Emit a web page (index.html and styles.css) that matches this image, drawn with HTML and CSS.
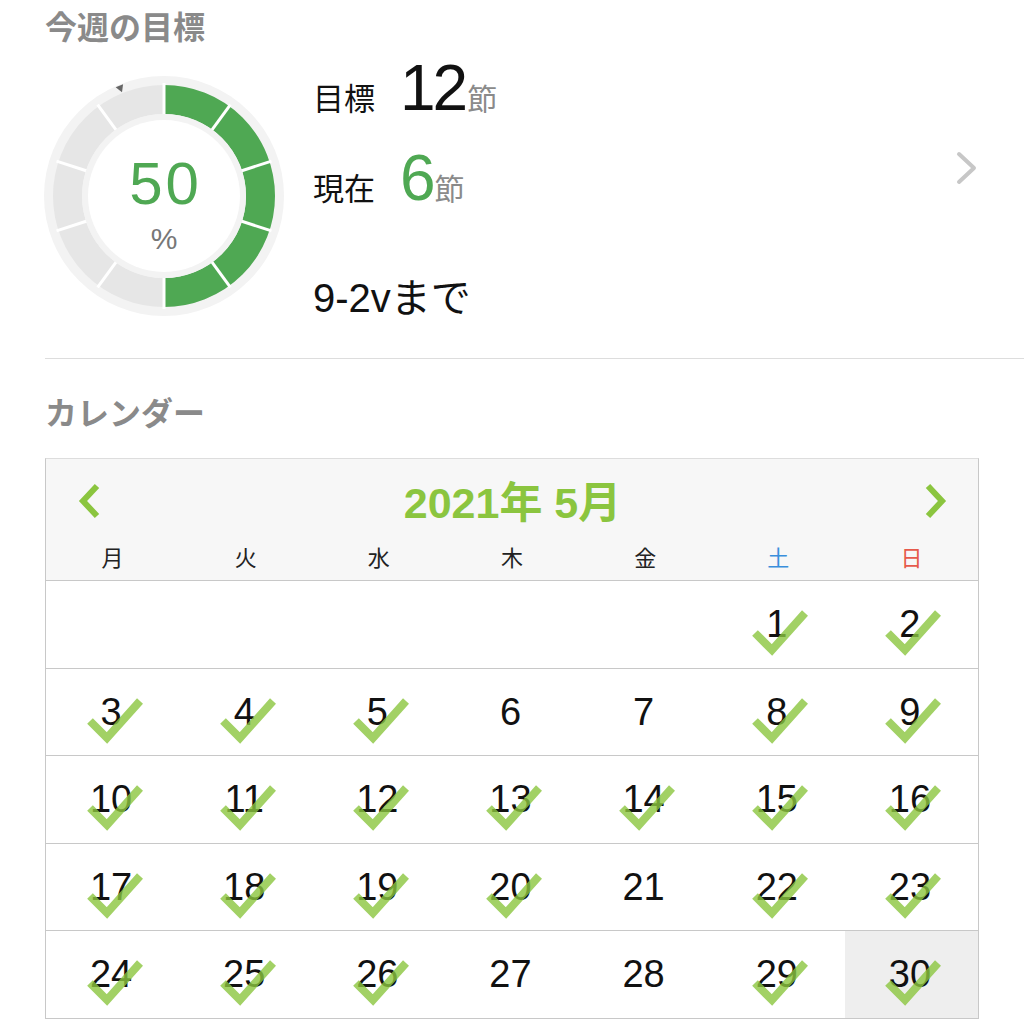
FILE: index.html
```html
<!DOCTYPE html>
<html lang="ja">
<head>
<meta charset="utf-8">
<title>今週の目標</title>
<link rel="stylesheet" href="styles.css">
</head>
<body>
<div class="page">
  <h2 class="section-title goal-title">今週の目標</h2>
  <div class="goal">
    <div class="donut">
      <svg class="ring" viewBox="0 0 240 240" width="240" height="240">
        <circle cx="120" cy="120" r="120" fill="#f3f3f3"/>
        <circle cx="120" cy="120" r="96.5" fill="none" stroke="#e6e6e6" stroke-width="29"/>
        <path d="M120 23.5 A96.5 96.5 0 0 1 120 216.5" fill="none" stroke="#4fa853" stroke-width="29"/>
        <g stroke="#ffffff" stroke-width="3">
          <line x1="120" y1="7" x2="120" y2="39"/>
          <line x1="120" y1="7" x2="120" y2="39" transform="rotate(36 120 120)"/>
          <line x1="120" y1="7" x2="120" y2="39" transform="rotate(72 120 120)"/>
          <line x1="120" y1="7" x2="120" y2="39" transform="rotate(108 120 120)"/>
          <line x1="120" y1="7" x2="120" y2="39" transform="rotate(144 120 120)"/>
          <line x1="120" y1="7" x2="120" y2="39" transform="rotate(180 120 120)"/>
          <line x1="120" y1="7" x2="120" y2="39" transform="rotate(216 120 120)"/>
          <line x1="120" y1="7" x2="120" y2="39" transform="rotate(252 120 120)"/>
          <line x1="120" y1="7" x2="120" y2="39" transform="rotate(288 120 120)"/>
          <line x1="120" y1="7" x2="120" y2="39" transform="rotate(324 120 120)"/>
        </g>
        <circle cx="120" cy="120" r="82" fill="#f3f3f3"/>
        <circle cx="120" cy="120" r="76" fill="#ffffff"/>
        <polygon points="-4,-3 4,-3 0,4" fill="#666666" transform="translate(76.5 12.5) rotate(-22)"/>
      </svg>
      <div class="donut-label">
        <span class="pct-num">50</span>
        <span class="pct-sign">%</span>
      </div>
    </div>
    <div class="info">
      <div class="row row-target"><span class="lab">目標</span><span class="num">12</span><span class="unit">節</span></div>
      <div class="row row-current"><span class="lab">現在</span><span class="num green">6</span><span class="unit">節</span></div>
      <div class="row row-until">9-2vまで</div>
    </div>
    <svg class="chev" viewBox="0 0 22 34" width="22" height="34">
      <path d="M3 3 L18 17 L3 31" fill="none" stroke="#c7c7c7" stroke-width="4" stroke-linecap="round" stroke-linejoin="round"/>
    </svg>
  </div>
  <div class="divider"></div>
  <h2 class="section-title cal-title">カレンダー</h2>
  <div class="calendar">
    <div class="cal-head">
      <div class="month-bar">
        <svg class="nav" viewBox="0 0 26 36" width="26" height="36">
          <path d="M20 3 L6 18 L20 33" fill="none" stroke="#8bc53f" stroke-width="6" stroke-linejoin="miter"/>
        </svg>
        <span class="month">2021年 5月</span>
        <svg class="nav" viewBox="0 0 26 36" width="26" height="36">
          <path d="M6 3 L20 18 L6 33" fill="none" stroke="#8bc53f" stroke-width="6" stroke-linejoin="miter"/>
        </svg>
      </div>
      <div class="weekdays">
        <span>月</span><span>火</span><span>水</span><span>木</span><span>金</span><span class="sat">土</span><span class="sun">日</span>
      </div>
    </div>
    <div class="days">
      <div class="day"></div><div class="day"></div><div class="day"></div><div class="day"></div><div class="day"></div>
      <div class="day done"><span class="d">1</span><svg class="check" viewBox="0 0 58 44"><path d="M4 24 L21 41 L54 4"/></svg></div>
      <div class="day done"><span class="d">2</span><svg class="check" viewBox="0 0 58 44"><path d="M4 24 L21 41 L54 4"/></svg></div>

      <div class="day done"><span class="d">3</span><svg class="check" viewBox="0 0 58 44"><path d="M4 24 L21 41 L54 4"/></svg></div>
      <div class="day done"><span class="d">4</span><svg class="check" viewBox="0 0 58 44"><path d="M4 24 L21 41 L54 4"/></svg></div>
      <div class="day done"><span class="d">5</span><svg class="check" viewBox="0 0 58 44"><path d="M4 24 L21 41 L54 4"/></svg></div>
      <div class="day"><span class="d">6</span></div>
      <div class="day"><span class="d">7</span></div>
      <div class="day done"><span class="d">8</span><svg class="check" viewBox="0 0 58 44"><path d="M4 24 L21 41 L54 4"/></svg></div>
      <div class="day done"><span class="d">9</span><svg class="check" viewBox="0 0 58 44"><path d="M4 24 L21 41 L54 4"/></svg></div>

      <div class="day done"><span class="d">10</span><svg class="check" viewBox="0 0 58 44"><path d="M4 24 L21 41 L54 4"/></svg></div>
      <div class="day done"><span class="d">11</span><svg class="check" viewBox="0 0 58 44"><path d="M4 24 L21 41 L54 4"/></svg></div>
      <div class="day done"><span class="d">12</span><svg class="check" viewBox="0 0 58 44"><path d="M4 24 L21 41 L54 4"/></svg></div>
      <div class="day done"><span class="d">13</span><svg class="check" viewBox="0 0 58 44"><path d="M4 24 L21 41 L54 4"/></svg></div>
      <div class="day done"><span class="d">14</span><svg class="check" viewBox="0 0 58 44"><path d="M4 24 L21 41 L54 4"/></svg></div>
      <div class="day done"><span class="d">15</span><svg class="check" viewBox="0 0 58 44"><path d="M4 24 L21 41 L54 4"/></svg></div>
      <div class="day done"><span class="d">16</span><svg class="check" viewBox="0 0 58 44"><path d="M4 24 L21 41 L54 4"/></svg></div>

      <div class="day done"><span class="d">17</span><svg class="check" viewBox="0 0 58 44"><path d="M4 24 L21 41 L54 4"/></svg></div>
      <div class="day done"><span class="d">18</span><svg class="check" viewBox="0 0 58 44"><path d="M4 24 L21 41 L54 4"/></svg></div>
      <div class="day done"><span class="d">19</span><svg class="check" viewBox="0 0 58 44"><path d="M4 24 L21 41 L54 4"/></svg></div>
      <div class="day done"><span class="d">20</span><svg class="check" viewBox="0 0 58 44"><path d="M4 24 L21 41 L54 4"/></svg></div>
      <div class="day"><span class="d">21</span></div>
      <div class="day done"><span class="d">22</span><svg class="check" viewBox="0 0 58 44"><path d="M4 24 L21 41 L54 4"/></svg></div>
      <div class="day done"><span class="d">23</span><svg class="check" viewBox="0 0 58 44"><path d="M4 24 L21 41 L54 4"/></svg></div>

      <div class="day done"><span class="d">24</span><svg class="check" viewBox="0 0 58 44"><path d="M4 24 L21 41 L54 4"/></svg></div>
      <div class="day done"><span class="d">25</span><svg class="check" viewBox="0 0 58 44"><path d="M4 24 L21 41 L54 4"/></svg></div>
      <div class="day done"><span class="d">26</span><svg class="check" viewBox="0 0 58 44"><path d="M4 24 L21 41 L54 4"/></svg></div>
      <div class="day"><span class="d">27</span></div>
      <div class="day"><span class="d">28</span></div>
      <div class="day done"><span class="d">29</span><svg class="check" viewBox="0 0 58 44"><path d="M4 24 L21 41 L54 4"/></svg></div>
      <div class="day done today"><span class="d">30</span><svg class="check" viewBox="0 0 58 44"><path d="M4 24 L21 41 L54 4"/></svg></div>
    </div>
  </div>
</div>
</body>
</html>
```

FILE: styles.css
```css
html, body {
  margin: 0;
  padding: 0;
  background: #ffffff;
  overflow: hidden;
}

body {
  font-family: "Liberation Sans", "Noto Sans CJK JP", sans-serif;
  color: #111111;
}

.page {
  padding-left: 45px;
}

.section-title {
  margin: 0;
  font-family: "Noto Sans CJK JP", sans-serif;
  font-weight: 700;
  font-size: 32px;
  line-height: 32px;
  color: #8a8a8a;
}

.goal-title {
  padding-top: 9px;
}

.goal {
  display: flex;
  align-items: flex-start;
  margin-top: 35px;
  margin-left: -1px;
}

.donut {
  display: grid;
  width: 240px;
  height: 240px;
  flex: none;
}

.ring,
.donut-label {
  grid-area: 1 / 1;
}

.donut-label {
  display: flex;
  flex-direction: column;
  align-items: center;
  padding-top: 78px;
}

.pct-num {
  font-size: 60px;
  line-height: 60px;
  letter-spacing: 3px;
  margin-right: -3px;
  color: #4fa853;
}

.pct-sign {
  margin-top: 10px;
  font-size: 30px;
  line-height: 30px;
  color: #777777;
}

.info {
  margin-left: 29px;
  margin-top: -20px;
  display: flex;
  flex-direction: column;
}

.row {
  display: flex;
  align-items: baseline;
  line-height: 1;
}

.lab {
  font-family: "Noto Sans CJK JP", sans-serif;
  font-size: 31px;
  width: 87px;
  color: #111111;
}

.num {
  font-size: 64px;
  letter-spacing: -3px;
  color: #111111;
}

.num.green {
  color: #4fa853;
}

.unit {
  font-family: "Noto Sans CJK JP", sans-serif;
  font-size: 30px;
  color: #8a8a8a;
  margin-left: 2px;
}

.row-current {
  margin-top: 26px;
}

.row-until {
  margin-top: 68px;
  font-size: 40px;
}

.chev {
  margin-left: auto;
  margin-right: 46px;
  margin-top: 75px;
}

.divider {
  margin-top: 40px;
  height: 1px;
  background: #dddddd;
}

.cal-title {
  margin-top: 36px;
}

.calendar {
  margin-top: 31px;
  width: 932px;
  border-left: 1px solid #c8c8c8;
  border-right: 1px solid #c8c8c8;
  border-top: 1px solid #dddddd;
}

.cal-head {
  background: #f7f7f7;
  border-bottom: 1px solid #c8c8c8;
}

.month-bar {
  height: 84px;
  display: flex;
  align-items: center;
  justify-content: space-between;
  padding: 0 30px 0 31px;
}

.month {
  font-size: 43px;
  line-height: 43px;
  margin-top: 4px;
  font-weight: 700;
  color: #8bc53f;
  font-family: "Liberation Sans", "Noto Sans CJK JP", sans-serif;
}

.weekdays {
  height: 37px;
  display: grid;
  grid-template-columns: repeat(7, 1fr);
  align-items: start;
  font-family: "Noto Sans CJK JP", sans-serif;
  font-size: 22px;
  line-height: 26px;
  text-align: center;
  color: #222222;
}

.weekdays .sat {
  color: #3a8fdc;
}

.weekdays .sun {
  color: #e65a4c;
}

.days {
  display: grid;
  grid-template-columns: repeat(7, 1fr);
  grid-auto-rows: 87.5px;
}

.day {
  position: relative;
  display: flex;
  align-items: center;
  justify-content: center;
  border-bottom: 1px solid #c8c8c8;
}

.day.today {
  background: #eeeeee;
}

.d {
  font-size: 38px;
  line-height: 38px;
  margin-left: -3px;
  color: #111111;
}

.check {
  position: absolute;
  left: calc(50% - 27px);
  top: calc(50% - 15px);
  width: 58px;
  height: 44px;
  overflow: visible;
}

.check path {
  fill: none;
  stroke: #8bc53f;
  stroke-width: 8;
  stroke-linejoin: miter;
  opacity: 0.8;
}
```
